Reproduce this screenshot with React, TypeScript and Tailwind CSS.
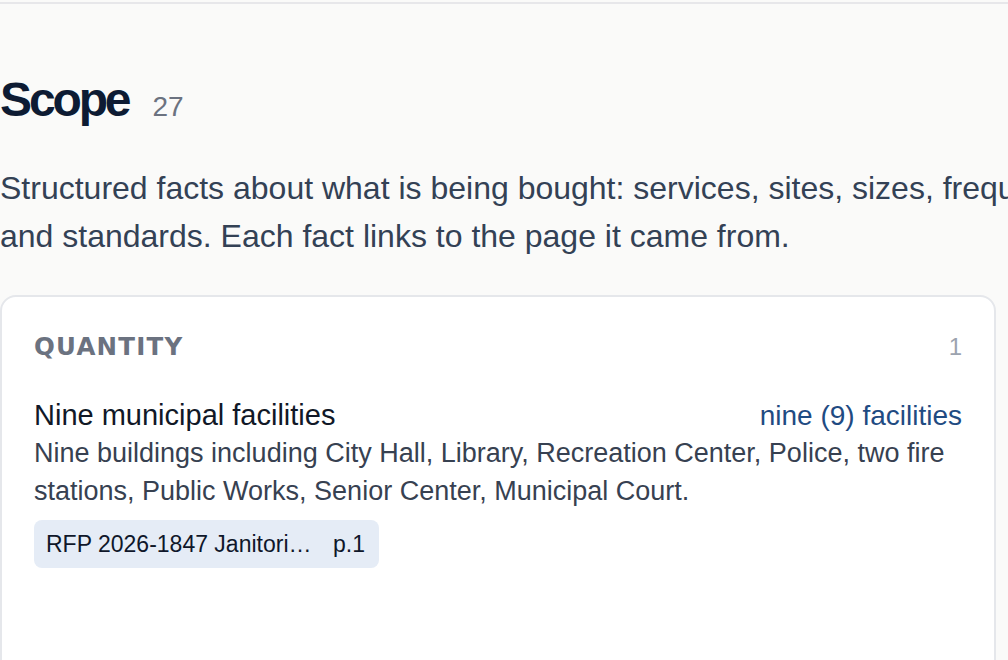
import React from 'react';

const sans = 'font-["Liberation_Sans",Arial,sans-serif]';

function SourceChip({ doc, page }: { doc: string; page: string }) {
  return (
    <div className="inline-flex h-12 items-center gap-4 rounded-lg bg-[#e5ecf6] px-3 text-[23px] text-[#0f172a]">
      <span className="max-w-[271px] truncate">{doc}</span>
      <span className="shrink-0 pr-[2px]">{page}</span>
    </div>
  );
}

export default function App() {
  return (
    <div className={`min-h-screen overflow-hidden bg-[#fafaf9] ${sans}`}>
      <div className="h-[4px] border-b-2 border-[#e7e7ea]" />

      <div className="w-[996px]">
        <div className="mt-[72px] flex items-baseline gap-6">
          <h1 className="text-[48px] font-bold leading-none tracking-[-0.065em] text-[#0d1b33]">Scope</h1>
          <span className="text-[28px] leading-none text-[#6b7280]">27</span>
        </div>

        <p className="mt-[40px] whitespace-nowrap text-[32px] leading-[48px] text-[#334155]">
          Structured facts about what is being bought: services, sites, sizes, frequencies, quantities,
          <br />
          and standards. Each fact links to the page it came from.
        </p>

        <section className="mt-[35px] min-h-[420px] rounded-2xl border-2 border-[#e5e7eb] bg-white p-8">
          <div className="flex items-baseline justify-between leading-[36px]">
            <h2 className='font-["DejaVu_Sans",Verdana,sans-serif] text-[24.5px] font-bold tracking-[0.05em] text-[#6b7280]'>
              QUANTITY
            </h2>
            <span className="text-[24px] text-[#9ca3af]">1</span>
          </div>

          <div className="mt-8">
            <div className="flex items-baseline justify-between leading-[37px]">
              <span className="text-[29px] text-[#111827]">Nine municipal facilities</span>
              <span className="text-[28px] text-[#1f4b82]">nine (9) facilities</span>
            </div>
            <p className="text-[27px] leading-[38px] text-[#374151]">
              Nine buildings including City Hall, Library, Recreation Center, Police, two fire stations, Public
              Works, Senior Center, Municipal Court.
            </p>
            <div className="mt-[10px]">
              <SourceChip doc="RFP 2026-1847 Janitorial Services" page="p.1" />
            </div>
          </div>
        </section>
      </div>
    </div>
  );
}
